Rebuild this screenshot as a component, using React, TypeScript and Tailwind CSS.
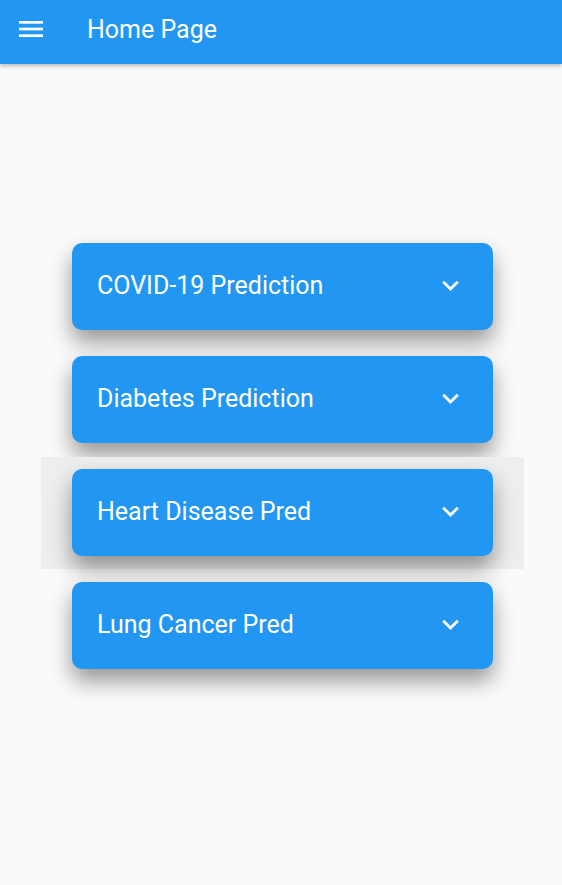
import React from "react";

const items = [
    "COVID-19 Prediction",
    "Diabetes Prediction",
    "Heart Disease Pred",
    "Lung Cancer Pred",
];

function MenuIcon() {
    return (
        <svg width="24" height="16" viewBox="0 0 24 16" fill="white">
            <rect x="0" y="0" width="24" height="2.7" />
            <rect x="0" y="6.65" width="24" height="2.7" />
            <rect x="0" y="13.3" width="24" height="2.7" />
        </svg>
    );
}

function ChevronDown() {
    return (
        <svg width="33" height="33" viewBox="0 0 24 24" fill="white">
            <path d="M16.59 8.59L12 13.17 7.41 8.59 6 10l6 6 6-6z" />
        </svg>
    );
}

export default function App() {
    return (
        <div
            className="min-h-[885px] bg-[#fafafa]"
            style={{ fontFamily: "Roboto, 'Noto Sans', sans-serif" }}
        >
            <header className="h-16 pb-[6px] bg-[#2196f3] flex items-center shadow-[0_2px_4px_rgba(0,0,0,0.25)] relative z-10">
                <div className="w-[87px] pl-[19px] flex items-center">
                    <MenuIcon />
                </div>
                <h1 className="text-[25px] text-white leading-none">Home Page</h1>
            </header>

            <main className="pt-[167px] flex flex-col gap-px">
                {items.map((label, i) => (
                    <div
                        key={label}
                        className={
                            "ml-[41px] w-[483px] pt-3 pb-[13px] px-[31px] " +
                            (i === 2 ? "bg-[#eeeeee]" : "")
                        }
                    >
                        <div className="h-[87px] rounded-[10px] bg-[#2196f3] flex items-center justify-between pl-[25px] pr-[26px] pb-[2px] shadow-[0_12px_22px_rgba(0,0,0,0.4)]">
                            <span className="text-[25px] text-white leading-none">{label}</span>
                            <ChevronDown />
                        </div>
                    </div>
                ))}
            </main>
        </div>
    );
}
